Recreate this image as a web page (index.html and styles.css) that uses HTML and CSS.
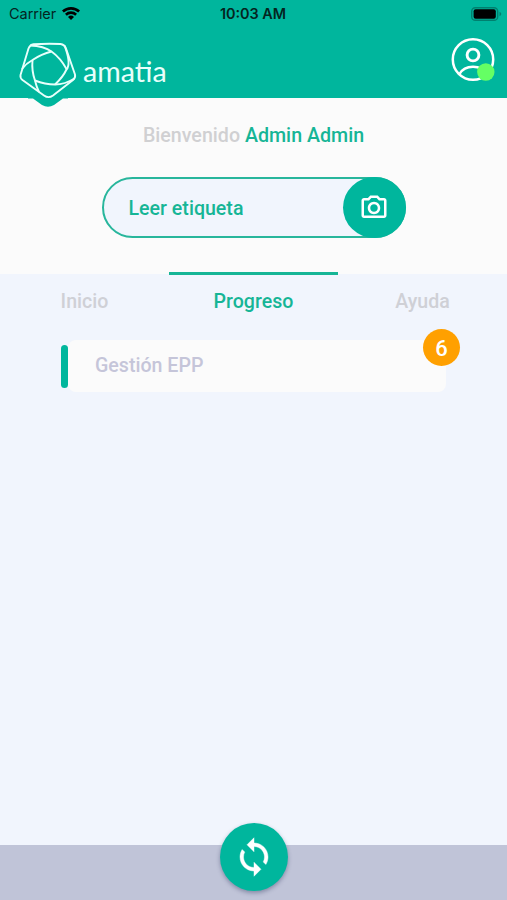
FILE: index.html
```html
<!DOCTYPE html>
<html lang="es">
<head>
<meta charset="utf-8">
<title>amatia</title>
<link rel="stylesheet" href="styles.css">
</head>
<body>
<div class="app">
  <header class="header">
    <div class="status">
      <span class="carrier">Carrier</span>
      <svg class="wifi" viewBox="0 0 18 14"><path d="M0 4.6a13 13 0 0 1 18 0l-1.8 2a10.3 10.3 0 0 0-14.4 0z"/><path d="M3 7.8a8.6 8.6 0 0 1 12 0l-1.8 2a6 6 0 0 0-8.4 0z"/><path d="M6 10.900a4.300 4.300 0 0 1 6 0l-3 3z"/></svg>
      <span class="time">10:03 AM</span>
      <svg class="battery" viewBox="0 0 31 14"><rect x=".7" y=".7" width="26" height="12.600" rx="3.600" fill="none" stroke="#00806f" stroke-width="1.400"/><rect x="2.600" y="2.200" width="22.200" height="9.600" rx="2" fill="#000"/><path d="M28.500 4.800q1.800.7 1.800 2.200t-1.800 2.200z" fill="#00806f"/></svg>
    </div>
    <div class="brand-row">
      <div class="brand">
        <svg class="logo" viewBox="0 0 66 72">
          <path class="tip" d="M13 58h40v2.500h-5l-9 6.500q-6 3.500-12 0l-9-6.500h-5z"/>
          <g class="lines">
            <path d="M18.500 6.300Q32 5.300 45.500 6Q49.500 6.500 51 10.500L60 36.500Q60.800 39.500 58 42L38 57.500Q33.500 60.800 29 57.500L7.500 42Q5 40 5.500 37L13.500 10.500Q15 6.800 18.500 6.300Z"/>
            <path d="M15 7.500Q29 8 36.500 13.500Q45.500 20 51.500 31"/>
            <path d="M49.500 7.500Q56.500 26 51.500 31.500Q48 39 40 46.500"/>
            <path d="M59.500 40.500Q50 46.500 40 46.500Q30 46.500 20 42.500"/>
            <path d="M24 54Q21.500 49 20 42.500Q16.500 33 17.500 22"/>
            <path d="M7 31Q11 25.500 17.500 22Q26.500 16 36.500 13.500"/>
          </g>
        </svg>
        <span class="name">ama<span class="joined">ti</span>a</span>
      </div>
      <svg class="user" viewBox="0 0 44 44">
        <g fill="none" stroke="#fff" stroke-width="2.500"><circle cx="22" cy="21.500" r="20.200"/><circle cx="22" cy="17" r="5.900" stroke-width="2.900"/><path d="M8.500 36Q12.500 28.700 22 28.700Q31.500 28.700 35.500 36"/></g>
        <circle cx="34.800" cy="34" r="8.700" fill="#65ff64"/>
      </svg>
    </div>
  </header>
  <section class="hero">
    <p class="welcome">Bienvenido <strong>Admin Admin</strong></p>
    <div class="scan">
      <span class="scan-label">Leer etiqueta</span>
      <span class="scan-button"><svg viewBox="0 0 24 24"><path d="M20 4h-3.170L15 2H9L7.170 4H4c-1.100 0-2 .9-2 2v12c0 1.100.9 2 2 2h16c1.100 0 2-.9 2-2V6c0-1.100-.9-2-2-2zm0 14H4V6h4.050l1.830-2h4.240l1.830 2H20v12zM12 7c-2.760 0-5 2.240-5 5s2.240 5 5 5 5-2.240 5-5-2.240-5-5-5zm0 8c-1.650 0-3-1.350-3-3s1.350-3 3-3 3 1.350 3 3-1.350 3-3 3z"/></svg></span>
    </div>
  </section>
  <nav class="tabs">
    <span class="tab">Inicio</span>
    <span class="tab active">Progreso</span>
    <span class="tab">Ayuda</span>
  </nav>
  <main class="content">
    <div class="item">
      <span class="marker"></span>
      <div class="card">Gestión EPP</div>
      <span class="badge">6</span>
    </div>
  </main>
  <footer class="footer">
    <div class="sync"><svg viewBox="0 0 24 24"><path d="M12 4V1L8 5l4 4V6c3.310 0 6 2.690 6 6 0 1.010-.25 1.970-.7 2.800l1.460 1.460C19.540 15.030 20 13.570 20 12c0-4.420-3.580-8-8-8zm0 14c-3.310 0-6-2.690-6-6 0-1.010.25-1.970.7-2.800L5.240 7.740C4.460 8.970 4 10.430 4 12c0 4.420 3.580 8 8 8v3l4-4-4-4v3z"/></svg></div>
  </footer>
</div>
</body>
</html>
```
FILE: styles.css
```css
* { box-sizing: border-box; }
body { margin: 0; font-family: Roboto, sans-serif; background: #f1f5fd; }
svg { display: block; flex: none; }
.app { width: 507px; height: 900px; display: flex; flex-direction: column; overflow: hidden; }
.header { position: relative; z-index: 1; height: 98px; flex: none; background: #00b69d; }
.status { height: 28px; display: grid; grid-template-columns: 53px 149px 84px 1fr 31px; align-items: center; padding: 0 5px 1px 9px; font: 14.500px Inter, sans-serif; color: #04251f; }
.carrier { letter-spacing: -.05px; }
.wifi { width: 18px; height: 14px; fill: #000; margin-top: -2px; }
.time { font-weight: 600; font-size: 14.400px; white-space: nowrap; text-align: center; }
.battery { width: 31px; height: 14px; grid-column: 5; }
.brand-row { height: 70px; display: flex; justify-content: space-between; padding: 10px 12px 0 15px; }
.brand { display: flex; align-items: flex-start; }
.logo { width: 66px; height: 72px; overflow: visible; }
.tip { fill: #00b69d; }
.lines { fill: none; stroke: #e8fffb; stroke-width: 1.900; stroke-linejoin: round; }
.name { font: 28.600px/36px Lato, sans-serif; color: #e8fffb; margin: 15px 0 0 2px; }
.joined { position: relative; }
.joined::after { content: ""; position: absolute; left: 9px; top: 13px; width: 7px; height: 2px; background: #e8fffb; }
.user { width: 44px; height: 44px; }
.hero { height: 176px; flex: none; background: #fbfbfb; display: flex; flex-direction: column; align-items: center; padding-top: 26px; }
.welcome { margin: 0 0 29px; font-size: 19.650px; line-height: 24px; font-weight: 500; color: #d0d0d2; }
.welcome strong { font-weight: 500; color: #16b596; }
.scan { width: 304px; height: 61px; border: 2px solid #28b69c; border-radius: 31px; background: #f1f5fd; display: flex; align-items: center; justify-content: space-between; padding-left: 25px; }
.scan-label { font-size: 19.600px; font-weight: 500; color: #16b596; padding-top: 2px; }
.scan-button { width: 63px; height: 61px; margin-right: -2px; border-radius: 50%; background: #00b69d; display: flex; align-items: center; justify-content: center; }
.scan-button svg { width: 30px; height: 30px; fill: #fff; margin-right: 1px; }
.tabs { height: 66px; flex: none; display: grid; grid-template-columns: repeat(3, 169px); margin-top: -2px; text-align: center; font-size: 19.600px; line-height: 24px; font-weight: 500; color: #cfd0d6; }
.tab { border-top: 3px solid transparent; padding-top: 15px; }
.active { color: #16b596; border-color: #16b596; }
.content { flex: 1; padding: 2px 61px; }
.item { position: relative; display: flex; align-items: center; }
.marker { width: 7px; height: 43px; border-radius: 4px; background: #00b69d; flex: none; }
.card { width: 379px; height: 52px; border-radius: 8px; background: #fbfbfb; padding-left: 27px; font-size: 19.600px; line-height: 51px; font-weight: 500; color: #c5c5d9; }
.badge { position: absolute; left: 362px; top: -11px; width: 37px; height: 37px; border-radius: 50%; background: #ffa000; color: #fff; font-size: 22px; font-weight: 500; line-height: 39px; text-align: center; }
.footer { height: 55px; flex: none; background: #c0c4d8; display: flex; justify-content: center; }
.sync { width: 68px; height: 68px; margin-top: -22px; flex: none; border-radius: 50%; background: #00b69d; box-shadow: 0 2px 4px rgba(40, 50, 90, .4); display: flex; align-items: center; justify-content: center; }
.sync svg { width: 42px; height: 42px; fill: #fff; stroke: #fff; stroke-width: .25; }
```
